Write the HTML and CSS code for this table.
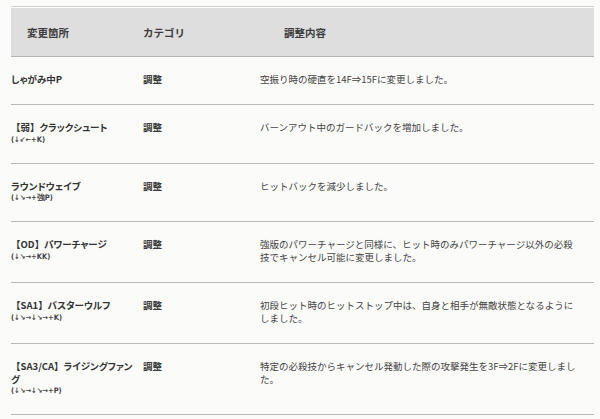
FILE: index.html
```html
<!DOCTYPE html>
<html lang="ja">
<head>
<meta charset="utf-8">
<link rel="stylesheet" href="styles.css">
</head>
<body>
<div class="table">
  <div class="head">
    <div class="h1">変更箇所</div>
    <div class="h2">カテゴリ</div>
    <div class="h3">調整内容</div>
  </div>
  <div class="row">
    <div class="name"><div class="nm">しゃがみ中P</div></div>
    <div class="cat">調整</div>
    <div class="desc">空振り時の硬直を14F⇒15Fに変更しました。</div>
  </div>
  <div class="row">
    <div class="name"><div class="nm"><span class="br">【</span>弱<span class="br">】</span>クラックシュート</div><div class="cmd">(↓↙←+K)</div></div>
    <div class="cat">調整</div>
    <div class="desc">バーンアウト中のガードバックを増加しました。</div>
  </div>
  <div class="row">
    <div class="name"><div class="nm">ラウンドウェイブ</div><div class="cmd">(↓↘→+強P)</div></div>
    <div class="cat">調整</div>
    <div class="desc">ヒットバックを減少しました。</div>
  </div>
  <div class="row">
    <div class="name"><div class="nm"><span class="br">【</span>OD<span class="br">】</span>パワーチャージ</div><div class="cmd">(↓↘→+KK)</div></div>
    <div class="cat">調整</div>
    <div class="desc">強版のパワーチャージと同様に、ヒット時のみパワーチャージ以外の必殺技でキャンセル可能に変更しました。</div>
  </div>
  <div class="row">
    <div class="name"><div class="nm"><span class="br">【</span>SA1<span class="br">】</span>バスターウルフ</div><div class="cmd">(↓↘→↓↘→+K)</div></div>
    <div class="cat">調整</div>
    <div class="desc">初段ヒット時のヒットストップ中は、自身と相手が無敵状態となるようにしました。</div>
  </div>
  <div class="row">
    <div class="name"><div class="nm"><span class="br">【</span>SA3/CA<span class="br">】</span>ライジングファン<br>グ</div><div class="cmd">(↓↘→↓↘→+P)</div></div>
    <div class="cat">調整</div>
    <div class="desc">特定の必殺技からキャンセル発動した際の攻撃発生を3F⇒2Fに変更しました。</div>
  </div>
</div>
</body>
</html>
```

FILE: styles.css
```css
html, body {
  margin: 0;
  padding: 0;
  background: #fbfbfa;
}
body {
  padding: 6px 0 0 11px;
  font-family: "Noto Sans CJK JP", "Noto Sans", sans-serif;
  color: #3a3a3a;
}
.table {
  width: 583px;
  border-top: 1px solid #d2d2d2;
  padding-top: 1px;
}
.head {
  display: grid;
  grid-template-columns: 132px 117px 334px;
  height: 48px;
  align-items: center;
  background: #dedede;
  border-bottom: 1px solid #b4b4b4;
  font-size: 10.5px;
  font-weight: 700;
  color: #3c3c3c;
}
.h1 { padding-left: 16px; }
.h3 { padding-left: 24px; }
.row {
  display: grid;
  grid-template-columns: 132px 117px 334px;
  align-items: start;
  padding: 16px 0 18px;
  border-bottom: 1px solid #b9b9b9;
}
.name {
  max-width: 128px;
}
.nm {
  font-size: 9.5px;
  line-height: 12.5px;
  font-weight: 700;
  color: #333;
  font-feature-settings: "palt";
}
.br {
  font-feature-settings: normal;
}
.cmd {
  font-family: "DejaVu Sans Condensed", "DejaVu Sans", sans-serif;
  font-size: 7.5px;
  line-height: 11px;
  font-weight: 700;
  color: #444;
}
.cat {
  font-size: 9.5px;
  line-height: 13px;
  font-weight: 700;
  color: #3a3a3a;
}
.desc {
  width: 318px;
  font-size: 9.5px;
  line-height: 13px;
  color: #444;
}
```
